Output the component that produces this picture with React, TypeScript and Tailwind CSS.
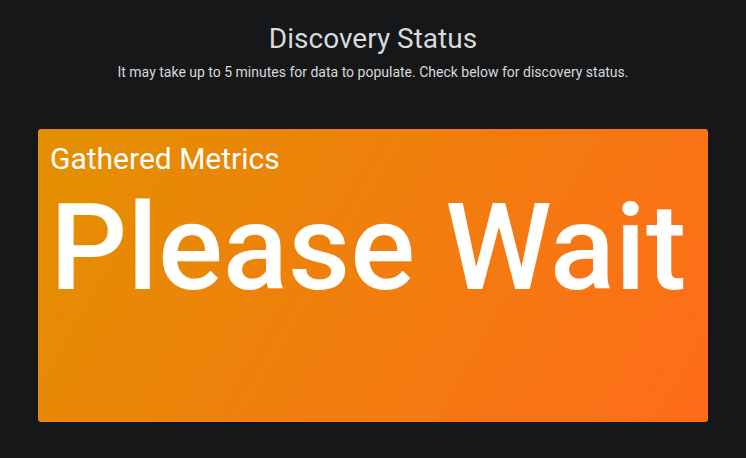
export default function App() {
  return (
    <div
      className="w-[746px] h-[458px] bg-[#161719] overflow-hidden"
      style={{ fontFamily: "Roboto, 'Liberation Sans', sans-serif" }}
    >
      <div className="flex flex-col items-center pt-[21px]">
        <h1 className="text-[28px] leading-[36px] text-[#d8d9da] font-normal">Discovery Status</h1>
        <p className="text-[14px] leading-[18px] text-[#d8d9da] mt-[6px]">
          It may take up to 5 minutes for data to populate. Check below for discovery status.
        </p>
      </div>
      <div className="mx-[38px] mt-[48px] h-[293px] rounded-[3px] bg-[linear-gradient(120deg,#e29000,#ff6c1a)] flex flex-col">
        <div className="text-white text-[30px] leading-[30px] pl-[12px] pt-[15px]">Gathered Metrics</div>
        <div className="text-white text-[121px] leading-[121px] font-medium pl-[12px] mt-[14px]">Please Wait</div>
      </div>
    </div>
  );
}
